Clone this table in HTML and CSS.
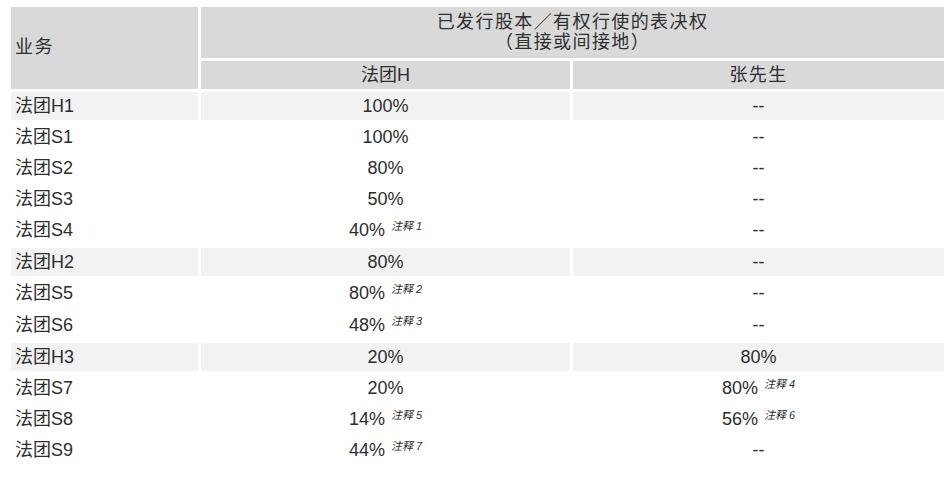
FILE: index.html
```html
<!DOCTYPE html>
<html lang="zh">
<head>
<meta charset="utf-8">
<title>表决权</title>
<link rel="stylesheet" href="styles.css">
</head>
<body>
<div class="wrap">
<table class="votes">
  <colgroup>
    <col class="c1">
    <col class="c2">
    <col class="c3">
  </colgroup>
  <thead>
    <tr class="h1row">
      <th rowspan="2" class="biz spaced">业务</th>
      <th colspan="2" class="spaced">已发行股本／有权行使的表决权<br>（直接或间接地）</th>
    </tr>
    <tr class="h2row">
      <th>法团H</th>
      <th class="spaced">张先生</th>
    </tr>
  </thead>
  <tbody>
    <tr class="hl"><td>法团H1</td><td>100%</td><td>--</td></tr>
    <tr><td>法团S1</td><td>100%</td><td>--</td></tr>
    <tr><td>法团S2</td><td>80%</td><td>--</td></tr>
    <tr><td>法团S3</td><td>50%</td><td>--</td></tr>
    <tr class="noted"><td>法团S4</td><td>40% <sup>注释 1</sup></td><td>--</td></tr>
    <tr class="hl"><td>法团H2</td><td>80%</td><td>--</td></tr>
    <tr class="noted"><td>法团S5</td><td>80% <sup>注释 2</sup></td><td>--</td></tr>
    <tr class="noted"><td>法团S6</td><td>48% <sup>注释 3</sup></td><td>--</td></tr>
    <tr class="hl"><td>法团H3</td><td>20%</td><td>80%</td></tr>
    <tr><td>法团S7</td><td>20%</td><td>80% <sup>注释 4</sup></td></tr>
    <tr><td>法团S8</td><td>14% <sup>注释 5</sup></td><td>56% <sup>注释 6</sup></td></tr>
    <tr><td>法团S9</td><td>44% <sup>注释 7</sup></td><td>--</td></tr>
  </tbody>
</table>
</div>
</body>
</html>
```

FILE: styles.css
```css
html, body {
  margin: 0;
  padding: 0;
  background: #ffffff;
}

.wrap {
  padding: 4px 0 0 8px;
}

.votes {
  width: 939px;
  table-layout: fixed;
  border-collapse: separate;
  border-spacing: 3px;
  font-family: "Liberation Sans", Arial, "Noto Sans CJK SC", sans-serif;
  font-size: 18px;
  line-height: 20px;
  color: #2e2e2e;
}

.c1 { width: 187px; }
.c2 { width: 369px; }
.c3 { width: 371px; }

.votes th {
  background: #d9d9d9;
  font-weight: normal;
  text-align: center;
  padding: 4px 3px;
  vertical-align: middle;
}

.votes th.biz {
  text-align: left;
  padding-left: 4px;
}

.spaced {
  letter-spacing: 1.4px;
}

.h1row th {
  height: 43px;
  padding-top: 3px;
  padding-bottom: 5px;
}

.h2row th {
  height: 20px;
}

.votes td {
  padding: 4px 3px;
  text-align: center;
  vertical-align: middle;
}

.votes tr.noted td {
  padding-bottom: 5px;
}

.votes td:first-child {
  text-align: left;
  padding-left: 4px;
}

.votes tr.hl td {
  background: #f2f2f2;
}

.votes sup {
  font-size: 11px;
  font-style: italic;
  line-height: 0;
  vertical-align: 6px;
  margin-left: 1px;
}
```
